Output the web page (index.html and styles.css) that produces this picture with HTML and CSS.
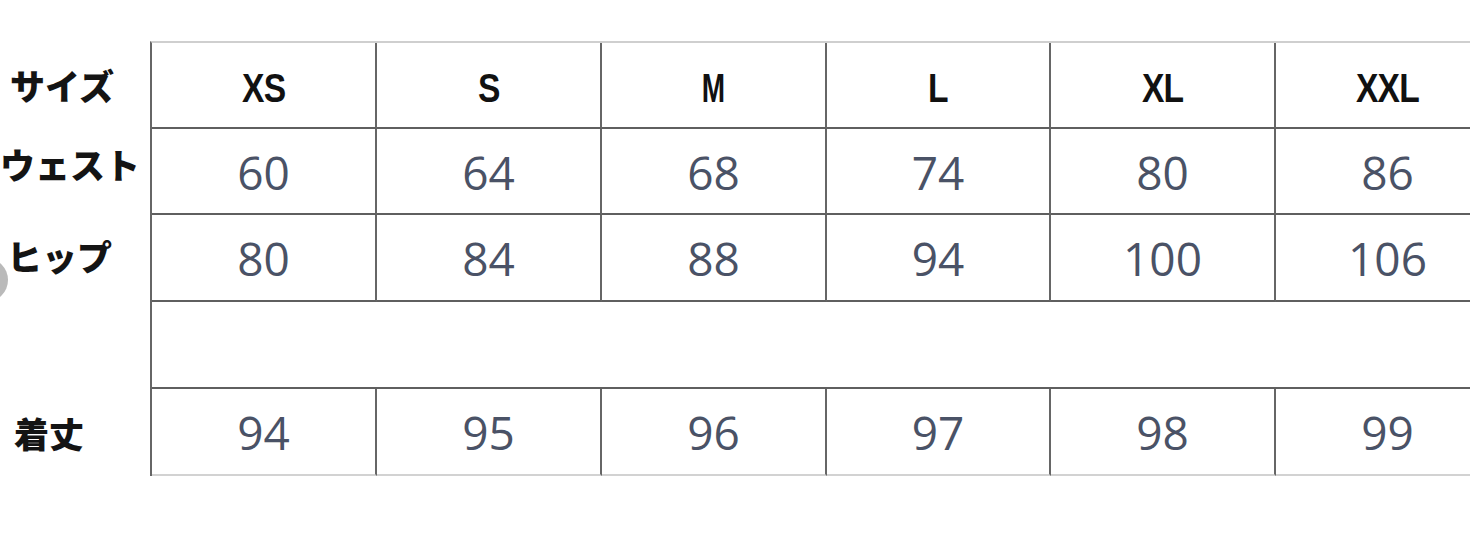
FILE: index.html
```html
<!DOCTYPE html>
<html lang="ja">
<head>
<meta charset="utf-8">
<title>サイズ表</title>
<link rel="stylesheet" href="styles.css">
</head>
<body>
<div class="page">
  <div class="labels">
    <div class="label">サイズ</div>
    <div class="label label-waist">ウェスト</div>
    <div class="label label-hip">ヒップ</div>
    <div class="label"></div>
    <div class="label label-length">着丈</div>
  </div>
  <div class="chart">
    <div class="cell head"><span class="head-text">XS</span></div>
    <div class="cell head"><span class="head-text">S</span></div>
    <div class="cell head"><span class="head-text narrow">M</span></div>
    <div class="cell head"><span class="head-text">L</span></div>
    <div class="cell head"><span class="head-text">XL</span></div>
    <div class="cell head"><span class="head-text">XXL</span></div>

    <div class="cell num">60</div>
    <div class="cell num">64</div>
    <div class="cell num">68</div>
    <div class="cell num">74</div>
    <div class="cell num">80</div>
    <div class="cell num">86</div>

    <div class="cell num">80</div>
    <div class="cell num">84</div>
    <div class="cell num">88</div>
    <div class="cell num">94</div>
    <div class="cell num">100</div>
    <div class="cell num">106</div>

    <div class="blank"></div>

    <div class="cell num last">94</div>
    <div class="cell num last">95</div>
    <div class="cell num last">96</div>
    <div class="cell num last">97</div>
    <div class="cell num last">98</div>
    <div class="cell num last">99</div>
  </div>
  <div class="nav-dot"></div>
</div>
</body>
</html>
```

FILE: styles.css
```css
html, body {
  margin: 0;
  padding: 0;
  background: #ffffff;
  overflow: hidden;
}

.page {
  position: relative;
  width: 1470px;
  height: 534px;
  display: flex;
  align-items: flex-start;
  padding-top: 41px;
  box-sizing: border-box;
}

.labels {
  width: 151px;
  flex: none;
  display: grid;
  grid-template-rows: 86px 86px 87px 87px 87px;
}

.label {
  width: 124px;
  display: flex;
  align-items: center;
  justify-content: center;
  font-family: "Noto Sans CJK JP", "Noto Sans", sans-serif;
  font-weight: 900;
  font-size: 35px;
  line-height: 1;
  color: #141414;
  white-space: nowrap;
}

.label-waist {
  width: 140px;
  letter-spacing: 0px;
  padding-bottom: 14px;
}

.label-hip {
  justify-content: flex-start;
  padding-left: 7px;
  padding-bottom: 2px;
}

.label-length {
  justify-content: flex-start;
  padding-left: 14px;
  padding-top: 4px;
}

.chart {
  flex: none;
  display: grid;
  grid-template-columns: repeat(3, 225px) 224px repeat(2, 225px);
  grid-template-rows: 86px 86px 87px 87px 87px;
  border-left: 2px solid #666666;
  border-top: 2px solid #cfcfcf;
  margin-left: -1px;
}

.cell {
  display: flex;
  align-items: center;
  justify-content: center;
  border-right: 2px solid #666666;
  border-bottom: 2px solid #5f5f5f;
  white-space: nowrap;
}

.head {
  font-family: "Liberation Sans", Arial, sans-serif;
  font-weight: 700;
  font-size: 40px;
  color: #111111;
  padding-top: 6px;
}

.head-text {
  display: inline-block;
  transform: scaleX(0.84);
  letter-spacing: -1px;
}

.head-text.narrow {
  transform: scaleX(0.7);
}

.num {
  font-family: "Open Sans", "Noto Sans", sans-serif;
  font-size: 46px;
  color: #4a5266;
  padding-top: 1px;
}

.blank {
  grid-column: 1 / -1;
  border-bottom: 2px solid #5f5f5f;
}

.last {
  border-bottom: 2px solid #d2d2d2;
}

.nav-dot {
  position: absolute;
  left: -36px;
  top: 258px;
  width: 44px;
  height: 44px;
  border-radius: 50%;
  background: #bababa;
}
```
